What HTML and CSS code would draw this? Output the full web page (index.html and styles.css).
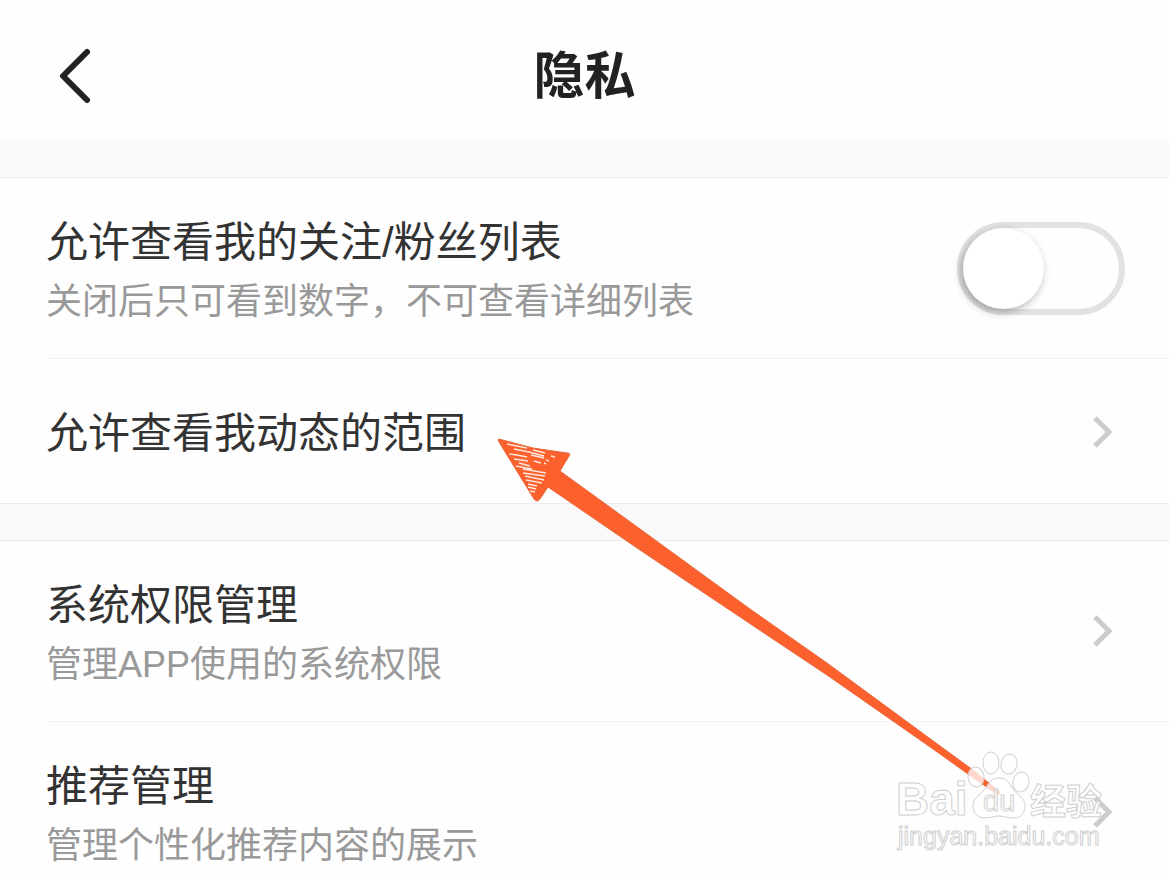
FILE: index.html
```html
<!DOCTYPE html>
<html lang="zh-CN">
<head>
<meta charset="UTF-8">
<meta name="viewport" content="width=device-width, initial-scale=1.0">
<title>隐私</title>
<link rel="stylesheet" href="styles.css">
</head>
<body>

<div class="page">
    <header class="header">
        <button class="back" type="button" aria-label="返回">
            <svg width="40" height="60" viewBox="0 0 40 60">
                <path d="M33 5 L9 29 L33 53" />
            </svg>
        </button>
        <h1>隐私</h1>
    </header>

    <main>
        <section class="group">
            <div class="row">
                <label class="text" for="follow-list">
                    <span class="title">允许查看我的关注/粉丝列表</span>
                    <span class="desc">关闭后只可看到数字，不可查看详细列表</span>
                </label>
                <input class="switch" type="checkbox" id="follow-list">
            </div>
            <a class="row" href="#range">
                <span class="text single">
                    <span class="title">允许查看我动态的范围</span>
                </span>
                <svg class="chevron" width="24" height="40" viewBox="0 0 24 40"><path d="M5 6 L19 20 L5 34" /></svg>
            </a>
        </section>

        <section class="group">
            <a class="row" href="#permission">
                <span class="text">
                    <span class="title">系统权限管理</span>
                    <span class="desc">管理APP使用的系统权限</span>
                </span>
                <svg class="chevron" width="24" height="40" viewBox="0 0 24 40"><path d="M5 6 L19 20 L5 34" /></svg>
            </a>
            <a class="row" href="#recommend">
                <span class="text">
                    <span class="title">推荐管理</span>
                    <span class="desc">管理个性化推荐内容的展示</span>
                </span>
                <svg class="chevron" width="24" height="40" viewBox="0 0 24 40"><path d="M5 6 L19 20 L5 34" /></svg>
            </a>
        </section>
    </main>

    <!-- hand drawn arrow pointing at the second row -->
    <svg class="arrow" width="520" height="370" viewBox="490 430 520 370" aria-hidden="true">
        <path class="arrow-body" d="M499 439 Q497 439 499 442 L534 499 Q537 503 540 499 L548 487 L640 550 L767 635 L827 675 L933 749 L968 774 L998 795 L1000 792 L973 770 L940 746 L827 663 L750 609 L640 529 L560 471 L569 456 Q571 453 567 453 L533 448 Z" />
        <g class="scratch">
            <path d="M507 444 L527 448 M533 450 L545 453 M514 449 L529 452 L544 456 M509 454 L517 455 L527 457 M531 455 L544 458 M551 456 L555 457 M514 459 L528 461 M519 463 L530 466 M534 461 L541 463 M546 460 L549 461 M516 466 L532 469 M544 463 L546 464 M523 469 L546 473 M523 473 L545 476 M525 476 L544 480 M526 480 L542 483 M528 484 L537 486 M528 487 L536 489 M530 491 L535 492" />
        </g>
    </svg>

    <svg class="watermark" width="220" height="110" viewBox="890 745 220 110" role="img" aria-label="Baidu 经验">
        <g class="paw">
            <ellipse cx="976" cy="777" rx="8" ry="10" transform="rotate(-8 976 777)" />
            <ellipse cx="991" cy="763" rx="8" ry="11" />
            <ellipse cx="1009" cy="764" rx="8" ry="10" transform="rotate(12 1009 764)" />
            <ellipse cx="1021" cy="782" rx="8" ry="10" transform="rotate(12 1021 782)" />
            <path d="M999 778 C990 778 988 785 984 790 C979 796 973 798 973 806 C973 813 978 818 985 818 C991 818 994 816 999 816 C1004 816 1008 818 1014 818 C1021 818 1025 813 1025 805 C1025 798 1017 795 1013 789 C1009 783 1007 778 999 778 Z" />
        </g>
        <text class="mark-logo" x="896" y="815">Bai</text>
        <text class="mark-du" x="983" y="811">du</text>
        <text class="mark-cn" x="1030" y="815">经验</text>
        <text class="mark-url" x="898" y="845">jingyan.baidu.com</text>
    </svg>
</div>

</body>
</html>
```
FILE: styles.css
```css
* {
    box-sizing: border-box;
}

body {
    margin: 0;
    background-color: #fefefe;
    font-family: "Liberation Sans", "Noto Sans CJK SC", sans-serif;
    color: #333;
}

.page {
    position: relative;
    height: 100vh;
    overflow: hidden auto;
    scrollbar-width: none;
}

.header {
    display: grid;
    grid-template-columns: 56px 1fr 56px;
    align-items: center;
    padding: 41px 54px 28px;
}

h1 {
    margin: 0;
    font-size: 51px;
    font-weight: bold;
    line-height: 72px;
    text-align: center;
    color: #222;
}

.back {
    display: flex;
    padding: 0;
    border: none;
    background: none;
    cursor: pointer;
}

.back path {
    fill: none;
    stroke: #222;
    stroke-width: 6;
    stroke-linecap: round;
    stroke-linejoin: round;
}

/* grey band above every group */
.group {
    border-top: 36px solid #f9f9f9;
    box-shadow: inset 0 1px #ebebeb;
    padding-top: 1px;
}

.group + .group {
    box-shadow: inset 0 1px #ebebeb, 0 -1px #ebebeb;
}

.row {
    display: flex;
    align-items: center;
    justify-content: space-between;
    margin-left: 46px;
    padding-right: 44px;
    color: inherit;
    text-decoration: none;
}

.row:not(:last-child) {
    border-bottom: 1px solid #f1f1f1;
}

.text {
    display: flex;
    flex-direction: column;
    padding: 35px 0 27px;
}

.single {
    padding: 45px 0 40px;
}

.title {
    font-size: 42px;
    line-height: 60px;
}

.desc {
    font-size: 36px;
    line-height: 58px;
    color: #999;
}

.switch {
    appearance: none;
    flex: none;
    width: 168px;
    height: 93px;
    margin: 0;
    border: 6px solid #e2e2e2;
    border-radius: 47px;
    background-color: #fefefe;
    cursor: pointer;
}

.switch::before {
    content: "";
    display: block;
    width: 81px;
    height: 81px;
    border-radius: 50%;
    background-color: #fff;
    box-shadow: -2px 3px 8px rgba(0, 0, 0, 0.3);
}

.switch:checked::before {
    margin-left: auto;
}

.chevron {
    flex: none;
    margin-right: 11px;
}

.chevron path {
    fill: none;
    stroke: #ccc;
    stroke-width: 5;
}

.arrow {
    position: absolute;
    left: 490px;
    top: 430px;
    pointer-events: none;
}

.arrow-body {
    fill: #fc602c;
    stroke: #e8683c;
    stroke-width: 1;
}

.scratch {
    fill: none;
    stroke: #ffe6da;
    stroke-width: 1.5;
}

.watermark {
    position: absolute;
    right: 59px;
    top: 745px;
    pointer-events: none;
}

.watermark text,
.paw {
    fill: #fff;
    fill-opacity: 0.75;
    stroke: #d0d0d0;
    stroke-width: 1;
}

.mark-logo {
    font-size: 46px;
    font-weight: bold;
}

.mark-du {
    font-size: 29px;
}

.mark-cn {
    font-size: 36px;
    font-weight: bold;
}

.mark-url {
    font-size: 25px;
}
```
